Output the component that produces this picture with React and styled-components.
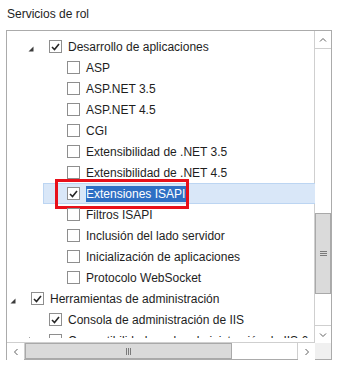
import styled, { createGlobalStyle } from "styled-components"

const GlobalStyle = createGlobalStyle`
    body {
        margin: 0;
        background: #ffffff;
        font-family: "Liberation Sans", Arial, sans-serif;
        font-size: 12px;
        color: #1e1e1e;
    }
`

const Page = styled.div`
    padding: 6px 0 0 6px;
    width: 326px;
`

const Title = styled.div`
    height: 16px;
    line-height: 16px;
    padding-left: 1px;
    margin-bottom: 8px;
`

const Box = styled.div`
    border: 1px solid #ababab;
    display: grid;
    grid-template-columns: 308px 16px;
    grid-template-rows: 312px 16px;
`

const Tree = styled.div`
    padding: 5px 0;
    box-sizing: border-box;
`

const Viewport = styled.div`
    height: 100%;
    overflow: hidden;
    white-space: nowrap;
`

const Row = styled.div`
    height: 21px;
    padding-left: ${(p) => p.level * 18}px;
`

const Item = styled.div`
    position: relative;
    height: 21px;
    box-sizing: border-box;
    display: flex;
    align-items: center;
    background: ${(p) => (p.active ? "#d9e7f8" : "transparent")};
    border: 1px solid ${(p) => (p.active ? "#bcd5f2" : "transparent")};
    border-right: none;
`

const Expander = styled.div`
    width: 23px;
    height: 21px;
    flex-shrink: 0;
    display: flex;
    align-items: center;
    padding-left: 2px;
    box-sizing: border-box;
`

const Check = styled.div`
    width: 13px;
    height: 13px;
    box-sizing: border-box;
    border: 1px solid #8e8e8e;
    background: #fff;
    flex-shrink: 0;
    display: flex;
    align-items: center;
    justify-content: center;
`

const Label = styled.span`
    margin-left: 6px;
    height: 16px;
    line-height: 16px;
    padding: 0 1px 0 0;
    background: ${(p) => (p.selected ? "#2e6fc4" : "transparent")};
    color: ${(p) => (p.selected ? "#ffffff" : "#1e1e1e")};
`

const Marker = styled.div`
    position: absolute;
    left: 11px;
    top: -5px;
    width: 134px;
    height: 30px;
    box-sizing: border-box;
    border: 3px solid #e8101a;
    pointer-events: none;
`

const VScroll = styled.div`
    display: flex;
    flex-direction: column;
    border-left: 1px solid #cfcfcf;
    margin-left: -1px;
`

const ArrowButton = styled.div`
    width: ${(p) => (p.wide ? "17px" : "auto")};
    height: 17px;
    flex-shrink: 0;
    display: flex;
    align-items: center;
    justify-content: center;
    background: #ffffff;
    box-sizing: border-box;
`

const VTrack = styled.div`
    flex: 1;
    border-top: 1px solid #cfcfcf;
    border-bottom: 1px solid #cfcfcf;
    background: #ffffff;
`

const VThumb = styled.div`
    margin-top: 164px;
    height: 81px;
    box-sizing: border-box;
    border: 1px solid #a9a9a9;
    background: #dadada;
    display: flex;
    align-items: center;
    justify-content: center;
`

const HScroll = styled.div`
    display: flex;
    border-top: 1px solid #cfcfcf;
    margin-top: -1px;
`

const HTrack = styled.div`
    flex: 1;
    display: flex;
    border-left: 1px solid #cfcfcf;
    border-right: 1px solid #cfcfcf;
`

const HThumb = styled.div`
    width: 207px;
    box-sizing: border-box;
    border: 1px solid #a9a9a9;
    background: #dadada;
    display: flex;
    align-items: center;
    justify-content: center;
`

const Corner = styled.div`
    background: #f0f0f0;
`

const rows = [
    { level: 1, label: "Desarrollo de aplicaciones", checked: true, expander: "open" },
    { level: 2, label: "ASP" },
    { level: 2, label: "ASP.NET 3.5" },
    { level: 2, label: "ASP.NET 4.5" },
    { level: 2, label: "CGI" },
    { level: 2, label: "Extensibilidad de .NET 3.5" },
    { level: 2, label: "Extensibilidad de .NET 4.5" },
    { level: 2, label: "Extensiones ISAPI", checked: true, active: true },
    { level: 2, label: "Filtros ISAPI" },
    { level: 2, label: "Inclusión del lado servidor" },
    { level: 2, label: "Inicialización de aplicaciones" },
    { level: 2, label: "Protocolo WebSocket" },
    { level: 0, label: "Herramientas de administración", checked: true, expander: "open" },
    { level: 1, label: "Consola de administración de IIS", checked: true },
    { level: 1, label: "Compatibilidad con la administración de IIS 6", expander: "closed" },
]

function ExpandIcon({ state }) {
    if (state === "open") {
        return (
            <svg width="6" height="6" viewBox="0 0 6 6" style={{ marginTop: 4 }}>
                <polygon points="5.5,0.5 5.5,5.5 0.5,5.5" fill="#3c3c3c" />
            </svg>
        )
    }
    return (
        <svg width="6" height="8" viewBox="0 0 6 8">
            <polygon points="1.5,0.5 5,4 1.5,7.5" fill="none" stroke="#8a8a8a" />
        </svg>
    )
}

function CheckMark() {
    return (
        <svg width="9" height="8" viewBox="0 0 9 8">
            <polyline points="1,4 3.5,6.5 8,1" fill="none" stroke="#262626" strokeWidth="1.6" />
        </svg>
    )
}

function Chevron({ dir }) {
    const pts = {
        up: "1,4.5 4,1.5 7,4.5",
        down: "1,1.5 4,4.5 7,1.5",
        left: "4.5,1 1.5,4 4.5,7",
        right: "1.5,1 4.5,4 1.5,7",
    }
    const vertical = dir === "up" || dir === "down"
    return (
        <svg width={vertical ? 8 : 6} height={vertical ? 6 : 8} viewBox={vertical ? "0 0 8 6" : "0 0 6 8"}>
            <polyline points={pts[dir]} fill="none" stroke="#606060" strokeWidth="1" />
        </svg>
    )
}

function Gripper({ vertical }) {
    return vertical ? (
        <svg width="7" height="6" viewBox="0 0 7 6">
            <rect x="0" y="0" width="7" height="1" fill="#7a7a7a" />
            <rect x="0" y="2" width="7" height="1" fill="#7a7a7a" />
            <rect x="0" y="4" width="7" height="1" fill="#7a7a7a" />
        </svg>
    ) : (
        <svg width="6" height="7" viewBox="0 0 6 7">
            <rect x="0" y="0" width="1" height="7" fill="#7a7a7a" />
            <rect x="2" y="0" width="1" height="7" fill="#7a7a7a" />
            <rect x="4" y="0" width="1" height="7" fill="#7a7a7a" />
        </svg>
    )
}

export default function App() {
    return (
        <Page>
            <GlobalStyle />
            <Title>Servicios de rol</Title>
            <Box>
                <Tree>
                    <Viewport>
                        {rows.map((r) => (
                            <Row key={r.label} level={r.level}>
                                <Item active={r.active}>
                                    <Expander>{r.expander && <ExpandIcon state={r.expander} />}</Expander>
                                    <Check>{r.checked && <CheckMark />}</Check>
                                    <Label selected={r.active}>{r.label}</Label>
                                    {r.active && <Marker />}
                                </Item>
                            </Row>
                        ))}
                    </Viewport>
                </Tree>
                <VScroll>
                    <ArrowButton><Chevron dir="up" /></ArrowButton>
                    <VTrack>
                        <VThumb><Gripper vertical /></VThumb>
                    </VTrack>
                    <ArrowButton><Chevron dir="down" /></ArrowButton>
                </VScroll>
                <HScroll>
                    <ArrowButton wide><Chevron dir="left" /></ArrowButton>
                    <HTrack>
                        <HThumb><Gripper /></HThumb>
                    </HTrack>
                    <ArrowButton wide><Chevron dir="right" /></ArrowButton>
                </HScroll>
                <Corner />
            </Box>
        </Page>
    )
}
